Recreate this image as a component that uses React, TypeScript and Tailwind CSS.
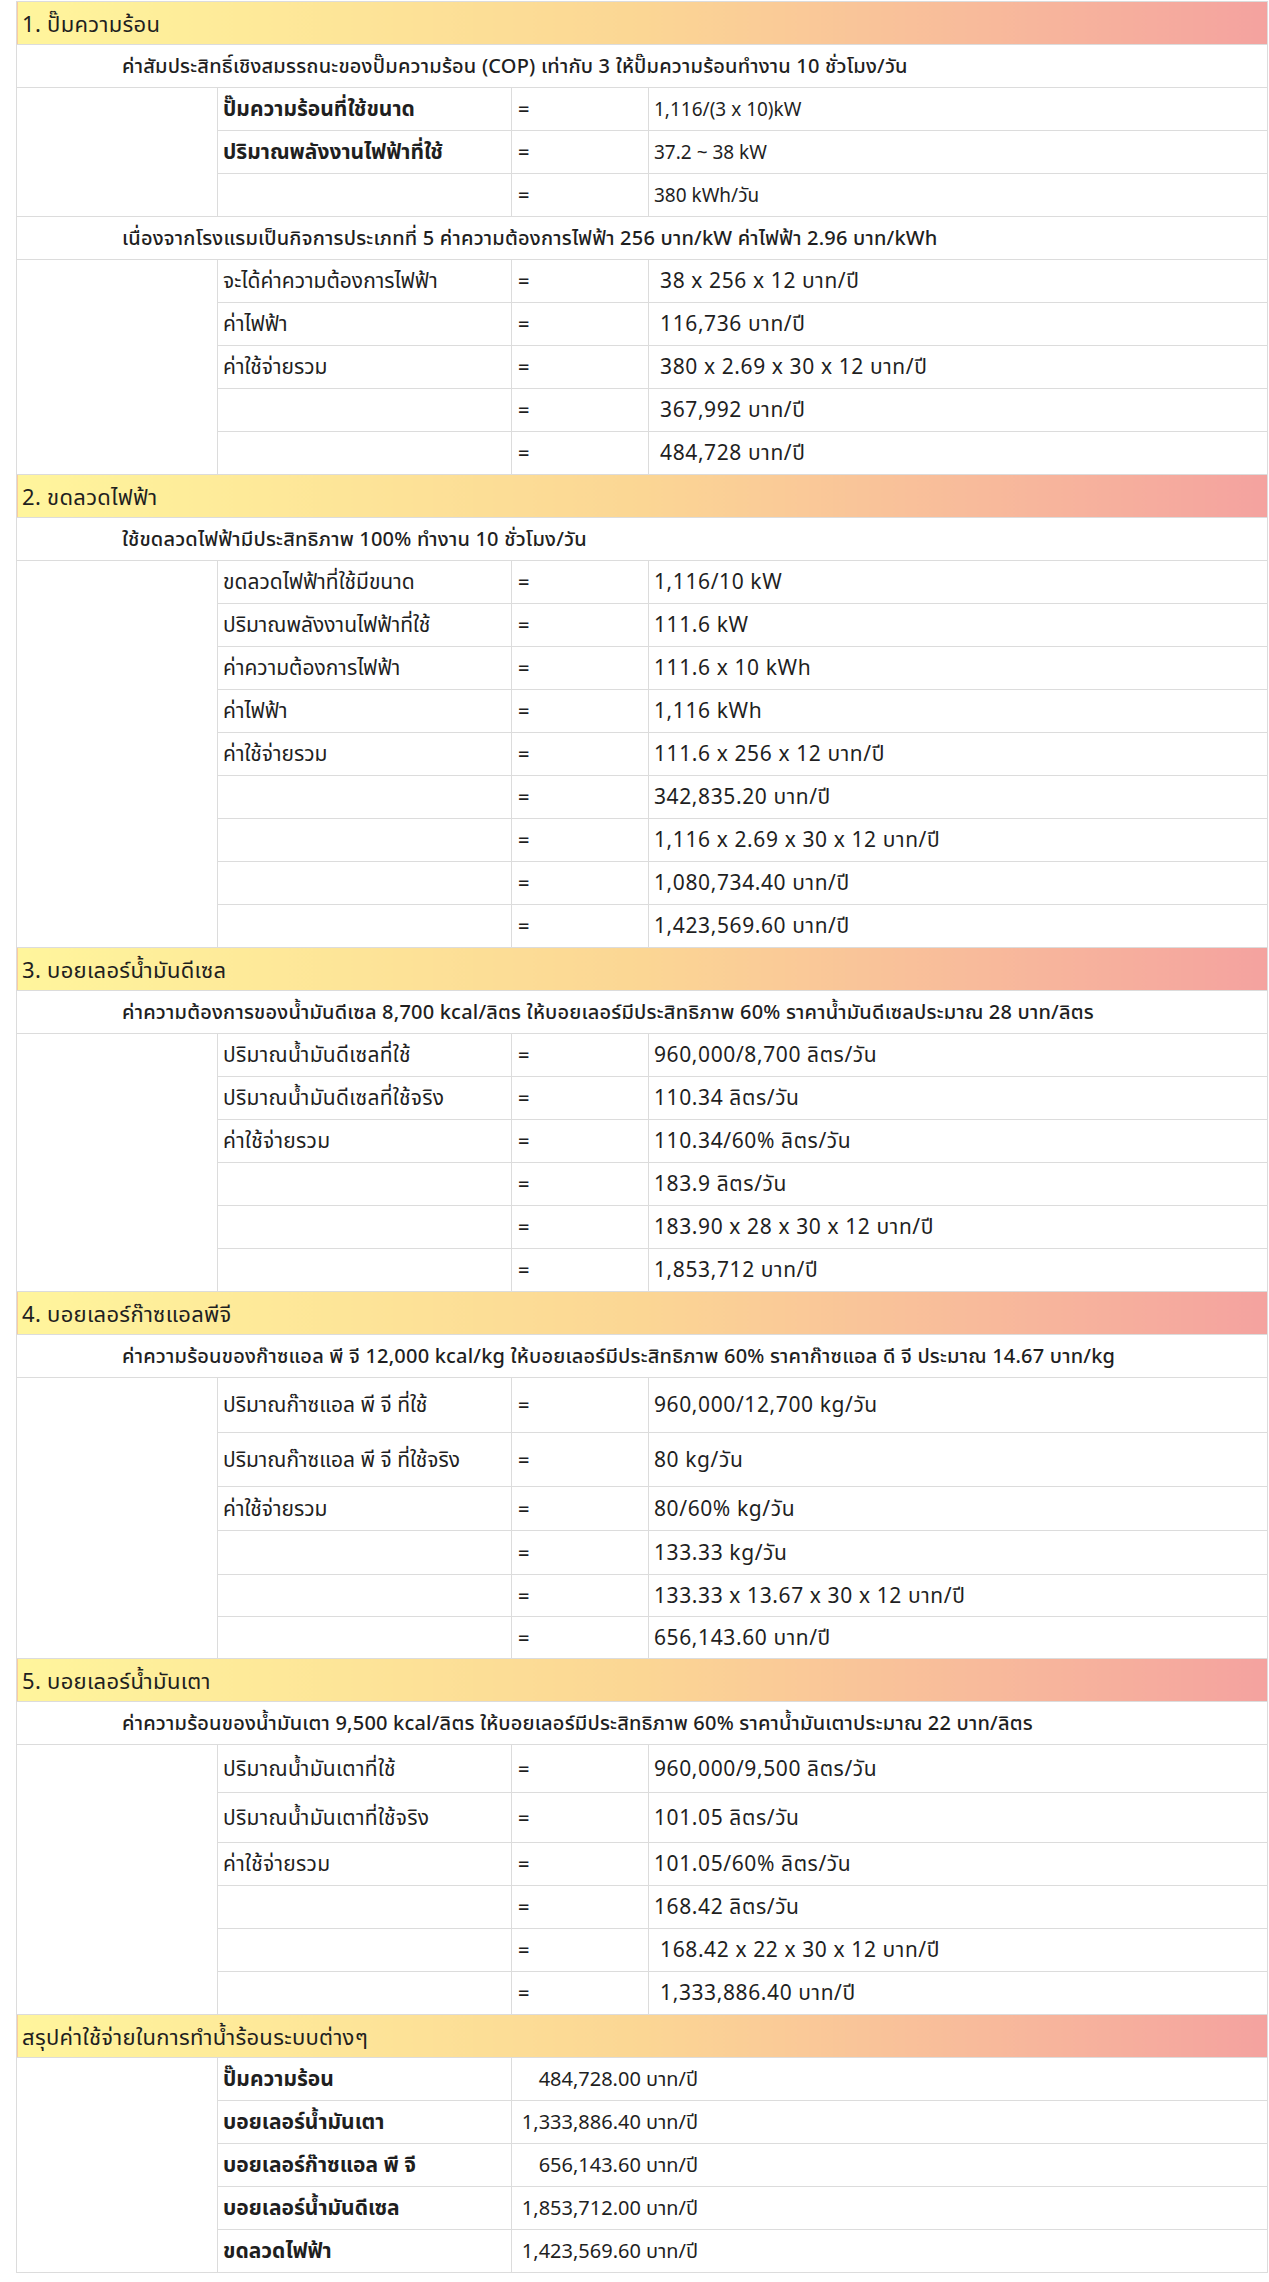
import React from "react";

type Row = { label?: string; value: string; h?: number; bold?: boolean };
type Group = { note: string; rows: Row[]; condensedLabel?: boolean; condensedValue?: boolean };
type Section = { title: string; groups: Group[] };

const sections: Section[] = [
  {
    title: "1. ปั๊มความร้อน",
    groups: [
      {
        note: "ค่าสัมประสิทธิ์เชิงสมรรถนะของปั๊มความร้อน (COP) เท่ากับ 3 ให้ปั๊มความร้อนทำงาน 10 ชั่วโมง/วัน",
        condensedLabel: true,
        condensedValue: true,
        rows: [
          { label: "ปั๊มความร้อนที่ใช้ขนาด", value: "1,116/(3 x 10)kW", bold: true },
          { label: "ปริมาณพลังงานไฟฟ้าที่ใช้", value: "37.2 ~ 38 kW", bold: true },
          { value: "380 kWh/วัน" },
        ],
      },
      {
        note: "เนื่องจากโรงแรมเป็นกิจการประเภทที่ 5 ค่าความต้องการไฟฟ้า 256 บาท/kW ค่าไฟฟ้า 2.96 บาท/kWh",
        condensedLabel: true,
        rows: [
          { label: "จะได้ค่าความต้องการไฟฟ้า", value: " 38 x 256 x 12 บาท/ปี" },
          { label: "ค่าไฟฟ้า", value: " 116,736 บาท/ปี" },
          { label: "ค่าใช้จ่ายรวม", value: " 380 x 2.69 x 30 x 12 บาท/ปี" },
          { value: " 367,992 บาท/ปี" },
          { value: " 484,728 บาท/ปี" },
        ],
      },
    ],
  },
  {
    title: "2. ขดลวดไฟฟ้า",
    groups: [
      {
        note: "ใช้ขดลวดไฟฟ้ามีประสิทธิภาพ 100% ทำงาน 10 ชั่วโมง/วัน",
        condensedLabel: true,
        rows: [
          { label: "ขดลวดไฟฟ้าที่ใช้มีขนาด", value: "1,116/10 kW" },
          { label: "ปริมาณพลังงานไฟฟ้าที่ใช้", value: "111.6 kW" },
          { label: "ค่าความต้องการไฟฟ้า", value: "111.6 x 10 kWh" },
          { label: "ค่าไฟฟ้า", value: "1,116 kWh" },
          { label: "ค่าใช้จ่ายรวม", value: "111.6 x 256 x 12 บาท/ปี" },
          { value: "342,835.20 บาท/ปี" },
          { value: "1,116 x 2.69 x 30 x 12 บาท/ปี" },
          { value: "1,080,734.40 บาท/ปี" },
          { value: "1,423,569.60 บาท/ปี" },
        ],
      },
    ],
  },
  {
    title: "3. บอยเลอร์น้ำมันดีเซล",
    groups: [
      {
        note: "ค่าความต้องการของน้ำมันดีเซล 8,700 kcal/ลิตร ให้บอยเลอร์มีประสิทธิภาพ 60% ราคาน้ำมันดีเซลประมาณ 28 บาท/ลิตร",
        rows: [
          { label: "ปริมาณน้ำมันดีเซลที่ใช้", value: "960,000/8,700 ลิตร/วัน" },
          { label: "ปริมาณน้ำมันดีเซลที่ใช้จริง", value: "110.34 ลิตร/วัน" },
          { label: "ค่าใช้จ่ายรวม", value: "110.34/60% ลิตร/วัน" },
          { value: "183.9 ลิตร/วัน" },
          { value: "183.90 x 28 x 30 x 12 บาท/ปี" },
          { value: "1,853,712 บาท/ปี" },
        ],
      },
    ],
  },
  {
    title: "4. บอยเลอร์ก๊าซแอลพีจี",
    groups: [
      {
        note: "ค่าความร้อนของก๊าซแอล พี จี 12,000 kcal/kg ให้บอยเลอร์มีประสิทธิภาพ 60% ราคาก๊าซแอล ดี จี ประมาณ 14.67 บาท/kg",
        condensedLabel: true,
        rows: [
          { label: "ปริมาณก๊าซแอล พี จี ที่ใช้", value: "960,000/12,700 kg/วัน", h: 55 },
          { label: "ปริมาณก๊าซแอล พี จี ที่ใช้จริง", value: "80 kg/วัน", h: 54 },
          { label: "ค่าใช้จ่ายรวม", value: "80/60% kg/วัน", h: 44 },
          { value: "133.33 kg/วัน", h: 44 },
          { value: "133.33 x 13.67 x 30 x 12 บาท/ปี", h: 42 },
          { value: "656,143.60 บาท/ปี", h: 42 },
        ],
      },
    ],
  },
  {
    title: "5. บอยเลอร์น้ำมันเตา",
    groups: [
      {
        note: "ค่าความร้อนของน้ำมันเตา 9,500 kcal/ลิตร ให้บอยเลอร์มีประสิทธิภาพ 60% ราคาน้ำมันเตาประมาณ 22 บาท/ลิตร",
        rows: [
          { label: "ปริมาณน้ำมันเตาที่ใช้", value: "960,000/9,500 ลิตร/วัน", h: 48 },
          { label: "ปริมาณน้ำมันเตาที่ใช้จริง", value: "101.05 ลิตร/วัน", h: 50 },
          { label: "ค่าใช้จ่ายรวม", value: "101.05/60% ลิตร/วัน" },
          { value: "168.42 ลิตร/วัน" },
          { value: " 168.42 x 22 x 30 x 12 บาท/ปี" },
          { value: " 1,333,886.40 บาท/ปี" },
        ],
      },
    ],
  },
];

const summary = [
  { label: "ปั๊มความร้อน", value: "484,728.00 บาท/ปี" },
  { label: "บอยเลอร์น้ำมันเตา", value: "1,333,886.40 บาท/ปี" },
  { label: "บอยเลอร์ก๊าซแอล พี จี", value: "656,143.60 บาท/ปี" },
  { label: "บอยเลอร์น้ำมันดีเซล", value: "1,853,712.00 บาท/ปี" },
  { label: "ขดลวดไฟฟ้า", value: "1,423,569.60 บาท/ปี" },
];

const font = "font-['Noto_Sans','Noto_Sans_Thai',sans-serif]";
const cell = "border border-[#dcdcdc] align-middle";
const head = `h-[43px] border border-[#dcdcdc] bg-linear-to-r from-[#fff59c] via-[#fbd694] via-50% to-[#f4a29f] px-[5px] align-middle text-[22px] tracking-[0.3px] ${font}`;
const labelRegular = `${font} text-[21px] tracking-[0.3px]`;
const labelCondensed = `${font} text-[21px]`;
const valueRegular = `${font} text-[21px] tracking-[0.6px]`;
const valueCondensed = `${font} text-[19px]`;

function SectionRows({ s }: { s: Section }) {
  return (
    <>
      <tr>
        <td colSpan={4} className={head}>
          {s.title}
        </td>
      </tr>
      {s.groups.map((g, gi) => (
        <React.Fragment key={gi}>
          <tr>
            <td
              colSpan={4}
              className={`${cell} h-[43px] pl-[105px] text-[20px] font-medium tracking-[0.2px] ${font}`}
            >
              {g.note}
            </td>
          </tr>
          {g.rows.map((r, ri) => (
            <tr key={ri} style={{ height: r.h ?? 43 }}>
              {ri === 0 && <td rowSpan={g.rows.length} className={cell} />}
              <td
                className={`${cell} whitespace-nowrap px-[5px] ${
                  g.condensedLabel ? labelCondensed : labelRegular
                } ${r.bold ? "font-bold" : ""}`}
              >
                {r.label}
              </td>
              <td className={`${cell} pl-[6px] text-[20px] font-medium ${font}`}>=</td>
              <td
                className={`${cell} whitespace-pre pl-[5px] ${
                  g.condensedValue ? valueCondensed : valueRegular
                }`}
              >
                {r.value}
              </td>
            </tr>
          ))}
        </React.Fragment>
      ))}
    </>
  );
}

export default function App() {
  return (
    <div className="min-h-[2282px] bg-white pt-[1px] text-[#1f1f1f]">
      <table className="ml-[16px] w-[1252px] table-fixed border-collapse">
        <colgroup>
          <col className="w-[201px]" />
          <col className="w-[294px]" />
          <col className="w-[137px]" />
          <col />
        </colgroup>
        <tbody>
          {sections.map((s, i) => (
            <SectionRows key={i} s={s} />
          ))}
          <tr>
            <td colSpan={4} className={head}>
              สรุปค่าใช้จ่ายในการทำน้ำร้อนระบบต่างๆ
            </td>
          </tr>
          {summary.map((r, i) => (
            <tr key={i} className="h-[43px]">
              {i === 0 && <td rowSpan={summary.length} className={cell} />}
              <td className={`${cell} whitespace-nowrap px-[5px] font-bold ${labelCondensed}`}>
                {r.label}
              </td>
              <td colSpan={2} className={`${cell} ${font} text-[20px]`}>
                <div className="w-[186px] whitespace-nowrap text-right">{r.value}</div>
              </td>
            </tr>
          ))}
        </tbody>
      </table>
    </div>
  );
}
